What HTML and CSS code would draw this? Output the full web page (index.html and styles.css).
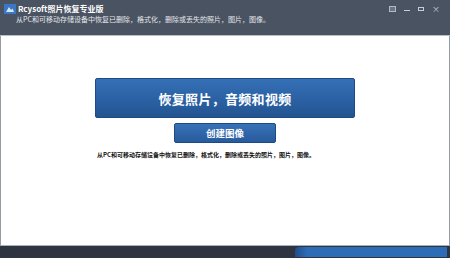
FILE: index.html
```html
<!DOCTYPE html>
<html lang="zh-CN">
<head>
    <meta charset="UTF-8">
    <meta name="viewport" content="width=device-width, initial-scale=1.0">
    <title>Rcysoft照片恢复专业版</title>
    <link rel="stylesheet" href="styles.css">
</head>
<body>

    <div class="app">
        <!-- Barre de titre -->
        <div class="titlebar">
            <div class="title-row">
                <svg class="app-icon" width="12" height="10" viewBox="0 0 12 10">
                    <rect x="0" y="0" width="12" height="10" fill="#3a78c4"/>
                    <path d="M2 8 L5 3 L7 6 L8.5 4.5 L10 8 Z" fill="#d6e6f7"/>
                </svg>
                <span class="app-title">Rcysoft照片恢复专业版</span>
                <div class="controls">
                    <span class="ctl ctl-box"></span>
                    <span class="ctl ctl-min"></span>
                    <span class="ctl ctl-max"></span>
                    <span class="ctl ctl-close">×</span>
                </div>
            </div>
            <div class="subtitle">从PC和可移动存储设备中恢复已删除，格式化，删除或丢失的照片，图片，图像。</div>
        </div>

        <!-- Contenu principal -->
        <div class="content">
            <div class="actions">
                <button class="btn-main">恢复照片，音频和视频</button>
                <button class="btn-small">创建图像</button>
                <p class="desc">从PC和可移动存储设备中恢复已删除，格式化，删除或丢失的照片，图片，图像。</p>
            </div>
        </div>

        <!-- Barre d'état -->
        <div class="statusbar">
            <div class="progress"></div>
        </div>
    </div>

</body>
</html>
```

FILE: styles.css
```css
/* Page de base */
body {
    margin: 0;
    padding: 0;
    background: #fff;
    font-family: 'Noto Sans CJK SC', 'Liberation Sans', sans-serif;
}

.app {
    width: 450px;
    height: 258px;
    display: flex;
    flex-direction: column;
    overflow: hidden;
}

/* Barre de titre sombre */
.titlebar {
    height: 36px;
    background: #4a5361;
    border-bottom: 1px solid #b9bfc7;
    box-sizing: border-box;
    padding: 3px 0 0 4px;
    color: #fff;
}

.title-row {
    display: flex;
    align-items: center;
    height: 11px;
}

.app-icon {
    flex-shrink: 0;
}

.app-title {
    margin-left: 2px;
    font-size: 8px;
    font-weight: bold;
    line-height: 11px;
}

.controls {
    margin-left: auto;
    margin-right: 10px;
    display: flex;
    align-items: center;
    gap: 8px;
    height: 11px;
}

.ctl {
    display: block;
    width: 6px;
    height: 4px;
    box-sizing: border-box;
    color: #c9ced6;
}

.ctl-box {
    width: 7px;
    height: 6px;
    border: 1px solid #b4bac3;
    background: #6b7482;
}

.ctl-min {
    border-bottom: 1px solid #c9ced6;
}

.ctl-max {
    border: 1px solid #c9ced6;
}

.ctl-close {
    width: auto;
    height: auto;
    font-size: 8px;
    line-height: 6px;
}

.subtitle {
    margin-left: 12px;
    font-size: 7px;
    line-height: 10px;
    color: #e4e7eb;
}

/* Zone blanche */
.content {
    flex: 1;
    background: #fff;
    border-left: 1px solid #959ba3;
    border-right: 1px solid #959ba3;
    border-bottom: 1px solid #aab0b7;
    display: flex;
    justify-content: center;
    padding-top: 42px;
}

.actions {
    width: 260px;
    display: flex;
    flex-direction: column;
    align-items: center;
}

.btn-main {
    width: 260px;
    height: 40px;
    border: 1px solid #1d4a85;
    border-radius: 2px;
    background: linear-gradient(#3570b6, #2a5fa2 60%, #22548f);
    color: #fff;
    font-family: 'Noto Sans CJK SC', sans-serif;
    font-size: 13px;
    font-weight: bold;
    letter-spacing: 0.3px;
    padding: 0;
}

.btn-small {
    width: 102px;
    height: 20px;
    margin-top: 5px;
    border: 1px solid #1d4a85;
    border-radius: 2px;
    background: linear-gradient(#3872b8, #275b9c);
    color: #fff;
    font-family: 'Noto Sans CJK SC', sans-serif;
    font-size: 9.5px;
    font-weight: bold;
    padding: 0;
}

.desc {
    align-self: flex-start;
    margin: 7px 0 0 2px;
    font-size: 6px;
    line-height: 9px;
    font-weight: bold;
    color: #111;
    white-space: nowrap;
}

/* Barre d'état en bas */
.statusbar {
    height: 12px;
    background: #2f3540;
    display: flex;
    justify-content: flex-end;
    padding: 1px 3px 1px 0;
    box-sizing: border-box;
}

.progress {
    width: 152px;
    background: linear-gradient(90deg, #1f4f8a, #2d6cb6 8%, #2d6cb6);
    border-radius: 4px 0 0 0;
}
```
